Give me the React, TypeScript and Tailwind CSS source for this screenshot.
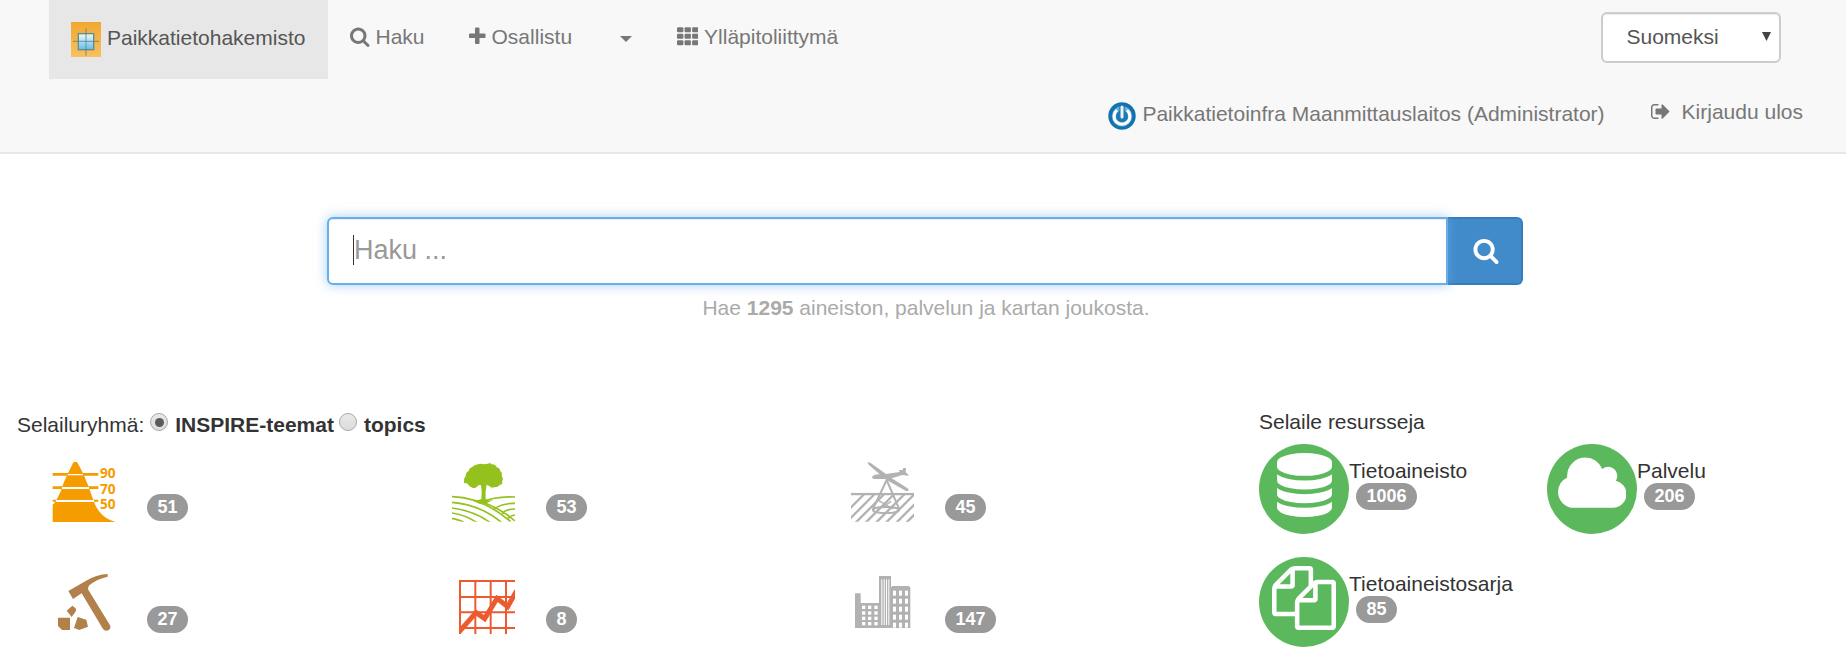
import React from "react";

type IconProps = { className?: string };

/* Icon outlines are drawn on a 1792-unit em square. */
const PATHS = {
  search:
    "M1152 832q0-185-131.5-316.5t-316.5-131.5-316.5 131.5-131.5 316.5 131.5 316.5 316.5 131.5 316.5-131.5 131.5-316.5zm512 832q0 52-38 90t-90 38q-54 0-90-38l-343-342q-179 124-399 124-143 0-273.5-55.5t-225-150-150-225-55.5-273.5 55.5-273.5 150-225 225-150 273.5-55.5 273.5 55.5 225 150 150 225 55.5 273.5q0 220-124 399l343 343q37 37 37 90z",
  plus: "M1408 736v192q0 40-28 68t-68 28h-416v416q0 40-28 68t-68 28h-192q-40 0-68-28t-28-68v-416h-416q-40 0-68-28t-28-68v-192q0-40 28-68t68-28h416v-416q0-40 28-68t68-28h192q40 0 68 28t28 68v416h416q40 0 68 28t28 68z",
  signOut:
    "M640 1440q0 4 1 20t.5 26.5-3 23.5-10 19.5-20.5 6.5h-320q-119 0-203.5-84.5t-84.5-203.5v-704q0-119 84.5-203.5t203.5-84.5h320q13 0 22.5 9.5t9.5 22.5q0 4 1 20t.5 26.5-3 23.5-10 19.5-20.5 6.5h-320q-66 0-113 47t-47 113v704q0 66 47 113t113 47h312l11.5 1 11.5 3 8 5.5 7 9 2 13.5zm928-544q0 26-19 45l-544 544q-19 19-45 19t-45-19-19-45v-288h-448q-26 0-45-19t-19-45v-384q0-26 19-45t45-19h448v-288q0-26 19-45t45-19 45 19l544 544q19 19 19 45z",
  database:
    "M768 768q237 0 443-43t325-127v170q0 69-103 128t-280 93.5-385 34.5-385-34.5-280-93.5-103-128v-170q119 84 325 127t443 43zm0 768q237 0 443-43t325-127v170q0 69-103 128t-280 93.5-385 34.5-385-34.5-280-93.5-103-128v-170q119 84 325 127t443 43zm0-384q237 0 443-43t325-127v170q0 69-103 128t-280 93.5-385 34.5-385-34.5-280-93.5-103-128v-170q119 84 325 127t443 43zm0-1152q208 0 385 34.5t280 93.5 103 128v128q0 69-103 128t-280 93.5-385 34.5-385-34.5-280-93.5-103-128v-128q0-69 103-128t280-93.5 385-34.5z",
  cloud:
    "M1984 1152q0 159-112.5 271.5t-271.5 112.5h-1088q-185 0-316.5-131.5t-131.5-316.5q0-132 71-241.5t187-163.5q-2-28-2-43 0-212 150-362t362-150q158 0 286.5 88t187.5 230q70-62 166-62 106 0 181 75t75 181q0 75-41 138 129 30 213 134.5t84 239.5z",
  files:
    "M1696 384q40 0 68 28t28 68v1216q0 40-28 68t-68 28h-960q-40 0-68-28t-28-68v-288h-544q-40 0-68-28t-28-68v-672q0-40 20-88t48-76l408-408q28-28 76-48t88-20h416q40 0 68 28t28 68v328q68-40 128-40h416zm-544 213l-299 299h299v-299zm-640-384l-299 299h299v-299zm196 647l316-316v-416h-384v416q0 40-28 68t-68 28h-416v640h512v-256q0-40 20-88t48-76zm956 804v-1152h-384v416q0 40-28 68t-68 28h-416v640h896z",
};

function Glyph({ d, box, className }: { d: string; box: string; className: string }) {
  return (
    <svg viewBox={box} className={className} fill="currentColor" aria-hidden="true">
      <path d={d} />
    </svg>
  );
}

function GridIcon({ className }: IconProps) {
  return (
    <svg viewBox="0 0 1792 1792" className={className} fill="currentColor" aria-hidden="true">
      {[100, 640, 1180].map((y) =>
        [0, 630, 1260].map((x) => <rect key={`${x}-${y}`} x={x} y={y} width="530" height="430" rx="96" />)
      )}
    </svg>
  );
}

function BrandLogo() {
  return (
    <svg viewBox="0 0 90 105" className="h-[35px] w-[30px] shrink-0" aria-hidden="true">
      <defs>
        <linearGradient id="brand-bg" x1="0" y1="0" x2="0" y2="1">
          <stop offset="0" stopColor="#f2a830" />
          <stop offset="1" stopColor="#f8c060" />
        </linearGradient>
        <linearGradient id="brand-tile" x1="0" y1="0" x2="0" y2="1">
          <stop offset="0" stopColor="#f2f8f8" />
          <stop offset="1" stopColor="#66bdea" />
        </linearGradient>
      </defs>
      <rect width="90" height="105" fill="url(#brand-bg)" />
      <rect x="22" y="35" width="46" height="48" fill="url(#brand-tile)" stroke="#5f8f8a" strokeWidth="4" />
      <path d="M45 19V101M6 58H84" stroke="#4a7f86" strokeOpacity=".75" strokeWidth="3" />
    </svg>
  );
}

function PowerAvatar() {
  return (
    <svg viewBox="0 0 28 28" className="size-7 shrink-0" aria-hidden="true">
      <circle cx="14" cy="14" r="13.7" fill="#1272ae" />
      <circle cx="14" cy="14.3" r="10.2" fill="#6fb0d8" />
      <circle cx="14" cy="14.3" r="6" fill="#1f7ab4" />
      <path d="M9 8.2A7.9 7.9 0 1 0 19 8.2" fill="none" stroke="#fff" strokeWidth="3" />
      <path d="M14 4V14.5" stroke="#1f7ab4" strokeWidth="5.4" />
      <path d="M14 5V15" stroke="#e6f3fa" strokeWidth="3" strokeLinecap="round" />
    </svg>
  );
}

function Elevation() {
  return (
    <svg viewBox="156 180 198 198" className="size-[66px]" fill="#f59c00" aria-hidden="true">
      <path d="M158 366V314Q168 306 172 295Q184 274 191 248Q202 224 219 189Q226 181 233 189Q252 222 264 256Q274 284 284 311Q299 346 330 360L347 366Z" />
      <path d="M158 219H204V227H158zM247 219H295V227H247zM158 259H190V267H158zM263 259H295V267H263zM158 299H176V305H158zM279 299H295V305H279z" />
      <path d="M203 222H249V226H203zM186 261H267V267H186zM168 300H282V306H168z" fill="#fff" />
      <g fontFamily="'Open Sans', sans-serif" fontWeight="700" fontSize="41">
        <text x="300" y="234">90</text>
        <text x="300" y="283">70</text>
        <text x="300" y="327">50</text>
      </g>
    </svg>
  );
}

function Pickaxe() {
  return (
    <svg viewBox="156 516 198 198" className="size-[66px]" fill="#b1804b" aria-hidden="true">
      <path d="M205 573L257 543Q290 523 323 522V530Q290 537 268 556Q263 562 264 568L330 676Q334 686 325 691Q315 695 309 687L245 580L219 597Z" />
      <path d="M217 617L227 625L228 633L215 651L200 632Z" />
      <path d="M174 653H210V690H186L174 678Z" />
      <path d="M233 651L259 659L264 680L238 690L222 684Z" />
    </svg>
  );
}

function TreeFields() {
  return (
    <svg viewBox="63 60 198 198" className="size-[66px]" aria-hidden="true">
      <defs>
        <clipPath id="fields">
          <rect x="66" y="60" width="189" height="185" />
        </clipPath>
      </defs>
      <path
        fill="#95c11f"
        d="M103 130Q99 118 107 109Q106 97 117 92Q117 84 126 82Q132 74 144 73Q153 70 164 73Q174 71 180 69L185 73Q196 72 200 82Q210 84 211 94Q218 98 215 108Q222 118 216 124Q220 133 209 135Q203 143 192 142Q184 146 179 139L170 134Q165 155 167 178Q174 183 190 180Q174 187 160 194Q140 188 127 182Q148 181 154 177Q157 158 153 136Q147 133 143 138Q137 147 127 143Q116 139 111 130Z"
      />
      <g clipPath="url(#fields)" fill="none" stroke="#95c11f" strokeWidth="5">
        <path d="M66 170Q158 172 242 245M66 187Q150 194 214 247M66 204Q130 212 180 247M66 219Q108 226 140 247M66 235Q84 238 101 246" />
        <path d="M147 190Q190 168 255 171M192 207Q218 189 255 190M216 220Q230 207 255 207M233 236Q241 226 255 225M165 189Q219 211 255 243" />
      </g>
    </svg>
  );
}

function Chart() {
  return (
    <svg viewBox="63 396 198 198" className="size-[66px]" aria-hidden="true">
      <defs>
        <clipPath id="chart">
          <rect x="87" y="419" width="168" height="163" />
        </clipPath>
      </defs>
      <g clipPath="url(#chart)" fill="none" stroke="#ec5b2f">
        <path strokeWidth="6" d="M90 419V582M136 419V582M182 419V582M228 419V582M87 423H256M87 471H256M87 517H256M87 564H256" />
        <path strokeWidth="15" d="M86 577L138 518L164 536L201 475L233 500L260 452" />
      </g>
    </svg>
  );
}

function Aerial() {
  return (
    <svg viewBox="60 60 198 198" className="size-[66px]" aria-hidden="true">
      <defs>
        <clipPath id="aerial">
          <rect x="63" y="158" width="189" height="87" />
        </clipPath>
      </defs>
      <g clipPath="url(#aerial)" fill="none" stroke="#b2b2b2" strokeWidth="7">
        <path d="M63 162H252" />
        <path d="M60 205L103 162M60 236L134 162M77 248L163 162M107 248L193 162M138 248L224 162M168 248L256 160M199 248L256 191M229 248L256 221" />
      </g>
      <g fill="none" stroke="#b2b2b2" strokeWidth="6">
        <path d="M170 120L128 209M170 120L208 208" />
        <ellipse cx="168" cy="210" rx="39" ry="9" />
        <path d="M145 181L190 207M184 184L142 210" strokeWidth="4" />
      </g>
      <path
        fill="#b2b2b2"
        d="M112 66L121 68L168 102L209 96L207 90L218 90L220 84L228 84L227 96L237 107L217 105L185 115L235 146L235 153H228L165 117L132 117Q124 114 127 109Q134 102 149 103L116 74Z"
      />
    </svg>
  );
}

function Buildings() {
  return (
    <svg viewBox="60 396 198 198" className="size-[66px]" aria-hidden="true">
      <path fill="#b2b2b2" d="M75 460H92V489H147V408H183V441H186V438H238V441H241V564H75Z" />
      <g fill="#fff">
        {[154, 161, 168, 175].map((x) => (
          <rect key={x} x={x} y="418" width="3" height="137" />
        ))}
        {[498, 515, 531, 547].map((y) =>
          [96, 114, 133].map((x) => <rect key={`${x}-${y}`} x={x} y={y - 1} width="10" height="10" />)
        )}
        {[452, 476, 500, 524, 548].map((y) =>
          [189, 207, 225].map((x) => <rect key={`${x}-${y}`} x={x} y={y} width="9" height="15" />)
        )}
      </g>
    </svg>
  );
}

function Badge({ value, className = "" }: { value: number; className?: string }) {
  return (
    <span
      className={`inline-block h-[27px] rounded-[15px] bg-[#999] px-[10.5px] pt-[4px] text-[18px] leading-[18px] font-bold text-white ${className}`}
    >
      {value}
    </span>
  );
}

function Radio({ checked }: { checked?: boolean }) {
  return (
    <span
      role="radio"
      aria-checked={!!checked}
      className="mb-[6px] flex size-[18px] items-center justify-center rounded-full border border-[#a8a8a8] bg-linear-to-b from-[#e9e9e9] to-[#dcdcdc]"
    >
      {checked && <span className="size-[9px] rounded-full bg-[#5b5b5b]" />}
    </span>
  );
}

const THEMES = [
  { icon: <Elevation />, count: 51 },
  { icon: <TreeFields />, count: 53 },
  { icon: <Aerial />, count: 45 },
  { icon: <Pickaxe />, count: 27 },
  { icon: <Chart />, count: 8 },
  { icon: <Buildings />, count: 147 },
];

const RESOURCES = [
  {
    name: "Tietoaineisto",
    count: 1006,
    icon: <Glyph d={PATHS.database} box="0 0 1536 1792" className="mt-[8.5px] h-[64px] w-[55px]" />,
  },
  {
    name: "Palvelu",
    count: 206,
    icon: <Glyph d={PATHS.cloud} box="64 0 1920 1792" className="mt-[8.5px] h-[64px] w-[68.5px]" />,
  },
  {
    name: "Tietoaineistosarja",
    count: 85,
    icon: <Glyph d={PATHS.files} box="0 0 1792 1792" className="mt-[8.5px] size-[64px]" />,
  },
];

export default function App() {
  return (
    <div className="h-[670px] w-[1846px] overflow-hidden bg-white font-['Liberation_Sans',Arial,sans-serif] text-[21px] leading-[30px] text-[#333]">
      <header className="h-[154px] border-b-2 border-[#e7e7e7] bg-[#f8f8f8] text-[#777]">
        <div className="flex h-[79px] items-start pr-[65px] pl-[49px]">
          <a className="flex h-[79px] w-[279px] items-center gap-[6px] bg-[#e7e7e7] pl-[22px] text-[#555]">
            <BrandLogo />
            <span className="-mt-[3px]">Paikkatietohakemisto</span>
          </a>
          <nav className="flex flex-1 pt-[22px]">
            <a className="ml-[22px] flex">
              <Glyph d={PATHS.search} box="0 0 1664 1792" className="mt-[4px] mr-[6px] h-[21px] w-[19.5px]" />
              Haku
            </a>
            <a className="ml-[44.5px] flex">
              <Glyph d={PATHS.plus} box="0 0 1408 1792" className="mt-[4px] mr-[6px] h-[21px] w-[16.5px]" />
              Osallistu
            </a>
            <span className="mt-[14px] ml-[47.5px] size-0 border-x-[6px] border-t-[6px] border-x-transparent border-t-[#777]" />
            <a className="ml-[45px] flex">
              <GridIcon className="mt-[4px] mr-[6px] size-[21.5px]" />
              Ylläpitoliittymä
            </a>
          </nav>
          <div className="mt-3 flex h-[51px] w-[180px] items-center justify-between rounded-md border-2 border-[#ccc] bg-white pr-[8px] pb-[2px] pl-[23.5px] text-[#555] shadow-[inset_0_1px_1px_rgba(0,0,0,0.075)]">
            Suomeksi
            <svg viewBox="0 0 9 9" className="h-[9px] w-[9px]" fill="#444" aria-hidden="true">
              <path d="M0 0H9L4.5 9Z" />
            </svg>
          </div>
        </div>
        <div className="flex items-start justify-end pt-[18px] pr-[43px]">
          <a className="flex pt-[2px]">
            <span className="mt-[3px] mr-[6px] flex">
              <PowerAvatar />
            </span>
            Paikkatietoinfra Maanmittauslaitos (Administrator)
          </a>
          <a className="ml-[46.5px] flex">
            <Glyph d={PATHS.signOut} box="0 0 1664 1792" className="mt-[4px] mr-[11px] h-[21px] w-[19.5px]" />
            Kirjaudu ulos
          </a>
        </div>
      </header>

      <section className="flex flex-col pt-[63px] pl-[327px]">
        <div className="flex h-[68px] w-[1196px]">
          <div className="z-10 flex w-[1121px] items-center rounded-l-[6px] border-2 border-[#66afe9] bg-white pb-[2px] pl-[24px] text-[27px] text-[#999] shadow-[inset_0_1px_1px_rgba(0,0,0,0.075),0_0_12px_rgba(102,175,233,0.6)]">
            <span className="h-[30px] w-px bg-[#333]" />
            <span>Haku ...</span>
          </div>
          <button className="flex w-[75px] items-center justify-center rounded-r-[6px] border-2 border-l-0 border-[#357ebd] bg-[#428bca] pb-[2px] pl-[2px] text-white">
            <Glyph d={PATHS.search} box="0 0 1664 1792" className="h-[27px] w-[26px]" />
          </button>
        </div>
        <p className="mt-[8px] w-[1198px] text-center text-[#aaa]">
          Hae <b>1295</b> aineiston, palvelun ja kartan joukosta.
        </p>
      </section>

      <main className="flex pt-[84px]">
        <section className="w-[1259px] shrink-0 pl-[17px]">
          <div className="mt-[3px] flex h-[30px] items-center">
            <span className="mr-[6px]">Selailuryhmä:</span>
            <Radio checked />
            <b className="mr-[5px] ml-[7px]">INSPIRE-teemat</b>
            <Radio />
            <b className="ml-[7px]">topics</b>
          </div>
          <div className="mt-[20px] ml-[35px] grid grid-cols-[399px_399px_399px] auto-rows-[112px]">
            {THEMES.map((t) => (
              <a key={t.count} className="flex items-start">
                {t.icon}
                <Badge value={t.count} className="mt-[34px] ml-[29px]" />
              </a>
            ))}
          </div>
        </section>
        <section>
          <h2>Selaile resursseja</h2>
          <div className="mt-[7px] grid grid-cols-[288px_288px] auto-rows-[113px]">
            {RESOURCES.map((r) => (
              <a key={r.name} className="flex items-start">
                <span className="flex size-[90px] shrink-0 items-start justify-center rounded-full bg-[#5cb85c] text-white">
                  {r.icon}
                </span>
                <span className="flex flex-col items-start pt-[12px]">
                  <span>{r.name}</span>
                  <Badge value={r.count} className="-mt-[3px] ml-[7px]" />
                </span>
              </a>
            ))}
          </div>
        </section>
      </main>
    </div>
  );
}
